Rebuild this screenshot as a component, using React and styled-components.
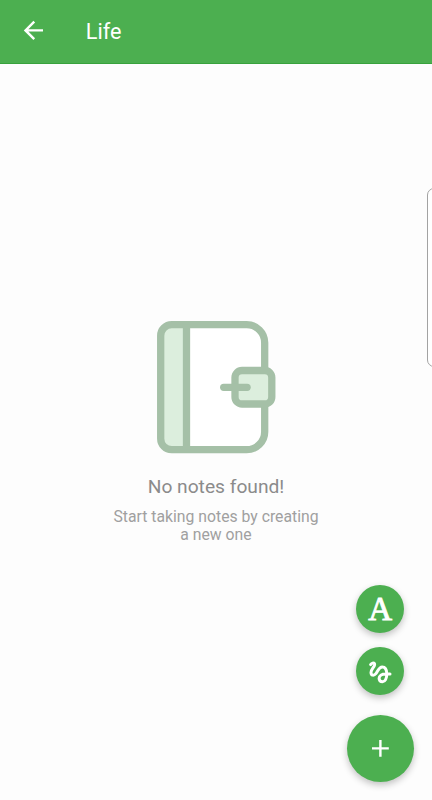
import React from "react";
import styled, { createGlobalStyle } from "styled-components";
import { MdArrowBack, MdAdd } from "react-icons/md";

const GlobalStyle = createGlobalStyle`
  * {
    box-sizing: border-box;
  }
  body {
    margin: 0;
    background: #fdfdfd;
    font-family: Roboto, "Liberation Sans", sans-serif;
  }
`;

const Screen = styled.div`
  position: relative;
  display: flex;
  flex-direction: column;
  height: 800px;
  overflow: hidden;
  background: #fdfdfd;
`;

const Header = styled.header`
  display: flex;
  align-items: center;
  height: 64px;
  padding: 0 18.5px 2px;
  background: #4caf50;
  border-bottom: 1px solid #38a23d;
`;

const IconButton = styled.button`
  display: flex;
  align-items: center;
  justify-content: center;
  padding: 0;
  border: 0;
  background: none;
  color: #fff;
  font-size: 28.8px;
`;

const Title = styled.h1`
  margin: 3px 0 0 38.5px;
  color: #fff;
  font-size: 21.6px;
  font-weight: 400;
  line-height: 26px;
`;

const Empty = styled.main`
  display: flex;
  flex-direction: column;
  align-items: center;
  padding-top: 256px;
  text-align: center;
`;

const EmptyTitle = styled.h2`
  margin: 21px 0 0;
  color: #8b8b8b;
  font-size: 19.2px;
  font-weight: 400;
  line-height: 24px;
`;

const EmptyText = styled.p`
  width: 220px;
  margin: 9px 0 0;
  color: #a0a0a0;
  font-size: 15.75px;
  line-height: 18px;
`;

const Actions = styled.div`
  position: absolute;
  right: 18px;
  bottom: 18px;
  display: flex;
  flex-direction: column;
  align-items: center;
`;

const Fab = styled(IconButton)`
  width: ${props => props.$size}px;
  height: ${props => props.$size}px;
  margin-top: ${props => props.$gap || 0}px;
  border-radius: 50%;
  background: #4caf50;
  box-shadow: 0 3px 7px rgba(0, 0, 0, 0.24);
`;

const Letter = styled.span`
  font-family: "Liberation Serif", serif;
  font-size: 33px;
  line-height: 34px;
  -webkit-text-stroke: 0.9px #fff;
`;

const EdgeHandle = styled.div`
  position: absolute;
  top: 188px;
  right: -10px;
  width: 15px;
  height: 179px;
  border: 1px solid #a3a3a3;
  border-radius: 7px;
  background: #fff;
`;

const Notebook = () => (
  <svg width="120" height="134" viewBox="0 0 120 134" fill="none">
    <rect x="4.7" y="4.7" width="104" height="125" rx="11" fill="#fff" />
    <path d="M30 4.7H15.7a11 11 0 0 0-11 11v103a11 11 0 0 0 11 11H30z" fill="#dceedd" />
    <g stroke="#a5c0a7" strokeWidth="7.3">
      <path d="M108.7 50V22.7a18 18 0 0 0-18-18h-75a11 11 0 0 0-11 11v103a11 11 0 0 0 11 11h75a18 18 0 0 0 18-18V84" />
      <path d="M30.5 4.7v125" />
      <rect x="79" y="50.5" width="36.8" height="33.5" rx="7" fill="#dceedd" />
      <path d="M67.7 67.3h23.4" strokeLinecap="round" />
    </g>
  </svg>
);

const Squiggle = () => (
  <svg
    width="28"
    height="28"
    viewBox="0 0 28 28"
    fill="none"
    stroke="currentColor"
    strokeWidth="3"
    strokeLinecap="round"
  >
    <path d="M4.6 7.6C5.8 6 7.6 5.5 8.5 6.7C9.8 8.8 5 12 5 15.5C5 18.6 7.8 19.1 9.9 16.6C11.9 14.2 13 9.9 16.2 9.9C19.6 9.9 20.8 13.6 20.8 17C20.8 21.6 19 24.8 16.6 24.8C14.5 24.8 13.1 23.3 13.1 21.3C13.1 18.7 15.8 16.9 19.5 16.9H24" />
  </svg>
);

export default () => {
  return (
    <Screen>
      <GlobalStyle />
      <Header>
        <IconButton aria-label="Back">
          <MdArrowBack />
        </IconButton>
        <Title>Life</Title>
      </Header>
      <Empty>
        <Notebook />
        <EmptyTitle>No notes found!</EmptyTitle>
        <EmptyText>
          Start taking notes by creating
          <br />a new one
        </EmptyText>
      </Empty>
      <EdgeHandle />
      <Actions>
        <Fab $size={48} aria-label="Text note">
          <Letter>A</Letter>
        </Fab>
        <Fab $size={48} $gap={14.5} aria-label="Drawing note">
          <Squiggle />
        </Fab>
        <Fab $size={67.5} $gap={19.5} aria-label="Add">
          <MdAdd />
        </Fab>
      </Actions>
    </Screen>
  );
};
